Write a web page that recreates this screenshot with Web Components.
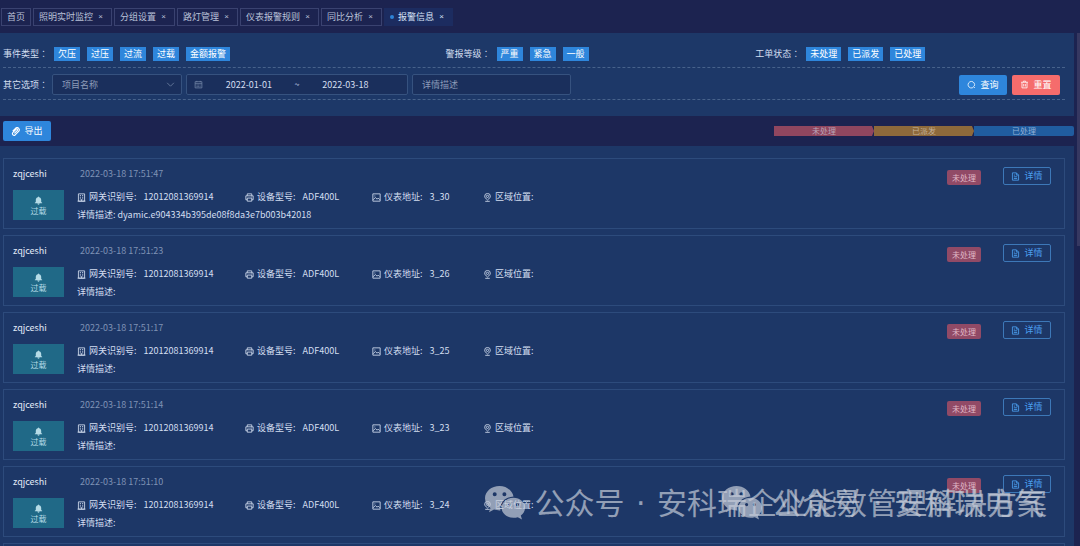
<!DOCTYPE html>
<html lang="zh-CN">
<head>
<meta charset="utf-8">
<title>报警信息</title>
<style>
  body { margin: 0; background: #1c2350; font: 9px/14px "Noto Sans CJK SC", "Liberation Sans", sans-serif; color: #d3def0; }
</style>
</head>
<body>
<alarm-page></alarm-page>
<script>
const RESET = `*{box-sizing:border-box} button,input,select{font:inherit;color:inherit;margin:0;border:0;background:none;border-radius:0;outline:0} button{display:inline-flex;align-items:center;justify-content:center;cursor:pointer;padding:0;white-space:nowrap} svg{display:block;flex:none} .colon{font-family:"Noto Sans CJK TC",sans-serif;margin:0}`;

const ICONS = {
  search: '<path d="M11.5 12.8A5.8 5.8 0 1 1 13 10.800M11.300 11.300l2.700 2.700"/>',
  trash: '<path d="M2 4h12M6 4V2h4v2M3.500 4v10h9V4M6.500 7v4.500M9.500 7v4.500"/>',
  clip: '<path d="M6 11.500l5.500-5.500a1.500 1.500 0 0 0-2.200-2.200L3.200 9.900a3 3 0 0 0 4.200 4.200L14 7.500a4 4 0 0 0-5.600-5.600L3 7.300" stroke-width="2"/>',
  calendar: '<path d="M2 3h12v11H2zM2 6.500h12M5 1.500V4M11 1.500V4M4.500 9h2M7.500 9h2M10.500 9h1M4.500 11.500h2M7.500 11.500h2M10.500 11.500h1"/>',
  chevron: '<path d="M2 5l6 6 6-6"/>',
  building: '<path d="M2.500 1.500h11v13h-11zM1 14.500h14M5 4.500h2M9 4.500h2M5 7.500h2M9 7.500h2M5 10.500h2M9 10.500h2M8 11v3" stroke-width="1.500"/>',
  printer: '<path d="M4 5V1.500h8V5M4 12H1.500V5h13v7H12M4 9h8v5.500H4zM11.500 7h1" stroke-width="1.500"/>',
  picture: '<path d="M1.500 1.500h13v13h-13zM2 12l4-4 3 3 2-2 3 3M5 4.500v1.500" stroke-width="1.500"/>',
  pin: '<path d="M8 12.500C4.500 9.500 3 8 3 5.800a5 5 0 0 1 10 0C13 8 11.500 9.500 8 12.500zM4 14.800h8" stroke-width="1.500"/><circle cx="8" cy="6" r="2"/>',
  doc: '<path d="M2.500 1.500h7l4 4v9h-11zM9.500 1.500v4h4M5 8.500h6M5 11.500h6M5 5.500h2" stroke-width="1.500"/>',
  bell: '<path d="M8 1a1 1 0 0 1 1 1c2.600.5 3.800 2.400 3.800 5v3.500L14.500 12v.8h-13V12l1.700-1.500V7C3.200 4.400 4.400 2.500 7 2a1 1 0 0 1 1-1zM6 13.500h4a2 2 0 0 1-4 0z" fill="currentColor" stroke="none"/>'
};

function define(name, css, html) {
  customElements.define(name, class extends HTMLElement {
    constructor() {
      super();
      this.attachShadow({ mode: 'open' });
    }
    connectedCallback() {
      const body = typeof html === 'function' ? html(this) : html;
      this.shadowRoot.innerHTML = `<style>${RESET}${css}</style>${body}`;
    }
  });
}

define('ui-icon', `:host{display:block;flex:none;width:9px;height:9px} svg{width:100%;height:100%}`,
  el => `<svg viewBox="0 0 16 16" fill="none" stroke="currentColor" stroke-width="1.400" aria-hidden="true">${ICONS[el.getAttribute('name')]}</svg>`);

define('page-tab', `
  :host{display:flex;align-items:center;height:18px;padding:0 8px 0 5px;border:1px solid #3a4270;color:#b9c1d8;white-space:nowrap;box-sizing:border-box}
  :host([fixed]){padding-right:5px}
  :host([active]){border-color:#1c2c60;background:#1c2c60;color:#d5e2f6}
  i{width:4px;height:4px;margin-right:4px;border-radius:50%;background:#2d83d6}
  .close{width:5px;margin-left:5px;font:8px/14px "Liberation Sans",sans-serif}`,
  el => `${el.hasAttribute('active') ? '<i></i>' : ''}<button><slot></slot></button>${el.hasAttribute('fixed') ? '' : '<button class="close" aria-label="关闭">×</button>'}`);

define('filter-group', `
  :host{display:flex;align-items:center}
  #l{margin-right:6px;white-space:nowrap}
  div{display:flex;gap:7px}
  button{height:14px;padding:0 4px;background:#2e86dc;color:#fff}`,
  el => `<span id="l">${el.getAttribute('label')}<span class="colon" lang="zh-TW">：</span></span><div role="group" aria-labelledby="l">${el.getAttribute('options').split(',').map(o => `<button>${o}</button>`).join('')}</div>`);

define('ui-button', `
  :host{display:block;flex:none}
  button{gap:4px;width:48px;height:20px;border-radius:2px;background:#2e86dc;color:#fff}
  :host([kind=danger]) button{background:#f56c6c}
  :host([kind=plain]) button{height:18px;background:none;border:1px solid #3d78b8;color:#4b9ff0}`,
  el => `<button><ui-icon name="${el.getAttribute('icon')}"></ui-icon><slot></slot></button>`);

define('filter-panel', `
  :host{display:block;padding:9px 9px 16px 3px;background:#1d3868}
  .row{border-bottom:1px dashed #47628b}
  .groups{display:grid;grid-template-columns:10fr 7fr 7fr;padding:5px 0 6px}
  .fields{display:flex;align-items:center;gap:4px;padding:6px 5px 4px 0}
  .box{display:flex;align-items:center;height:21px;min-width:0;border:1px solid #36527f;border-radius:2px;background:#1a2f5c}
  .pick{position:relative;flex:0 1 130px}
  select{appearance:none;width:100%;height:100%;padding:0 20px 0 9px;color:#8c9bb8}
  .pick ui-icon{position:absolute;right:6px;color:#7284a6;pointer-events:none}
  .range{flex:0 1 222px;padding:0 16px 0 7px}
  .range ui-icon{color:#7284a6}
  .range input{flex:1;width:0;min-width:0;text-align:center;padding:0}
  .desc{flex:0 1 159px;padding:0 9px}
  .desc::placeholder{color:#8c9bb8;opacity:1}
  .end{display:flex;gap:5px;margin-left:auto}`,
  `<div class="row groups">
     <filter-group label="事件类型" options="欠压,过压,过流,过载,金额报警"></filter-group>
     <filter-group label="警报等级" options="严重,紧急,一般"></filter-group>
     <filter-group label="工单状态" options="未处理,已派发,已处理"></filter-group>
   </div>
   <div class="row fields">
     <label for="project">其它选项<span class="colon" lang="zh-TW">：</span></label>
     <div class="box pick"><select id="project"><option>项目名称</option></select><ui-icon name="chevron"></ui-icon></div>
     <div class="box range"><ui-icon name="calendar"></ui-icon><input aria-label="开始日期" value="2022-01-01"><span>~</span><input aria-label="结束日期" value="2022-03-18"></div>
     <input class="box desc" aria-label="详情描述" placeholder="详情描述">
     <div class="end"><ui-button icon="search">查询</ui-button><ui-button icon="trash" kind="danger">重置</ui-button></div>
   </div>`);

define('status-legend', `
  :host{display:flex;width:300px}
  span{flex:1;height:10px;line-height:10px;font-size:8px;text-align:center;color:#b9a5b8;background:#90465f;clip-path:polygon(0 0,98% 0,100% 50%,98% 100%,0 100%)}
  .sent{background:#8e693b;color:#c5b19a}
  .done{background:#205c9f;color:#8fb0d8;border-radius:0 2px 2px 0;clip-path:none}`,
  `<span>未处理</span><span class="sent">已派发</span><span class="done">已处理</span>`);

define('info-field', `
  :host{display:flex;align-items:center;white-space:nowrap}
  ui-icon{margin-right:3px} b{font-weight:400;margin-right:7px}`,
  el => `<ui-icon name="${el.getAttribute('icon')}"></ui-icon><b>${el.getAttribute('label')}:</b><slot></slot>`);

define('alarm-card', `
  :host{display:flex;justify-content:space-between;min-height:71px;padding:8px 13px 4px 9px;border:1px solid #2d4b7c;line-height:18px;box-sizing:border-box}
  .head{display:flex;height:14px;line-height:14px;margin-bottom:5px}
  .name{width:67px;color:#e4ecf8}
  time{color:#7f92b5}
  .body{display:flex;align-items:center;gap:13px}
  .type{display:flex;flex-direction:column;align-items:center;justify-content:center;width:51px;height:30px;padding-top:2px;line-height:11px;background:#206987;color:#b5dbe6;font-size:8px}
  .info{padding-top:2px}
  .fields{display:grid;grid-template-columns:168px 127px 111px auto}
  .side{display:flex;align-items:center;gap:22px;height:18px;margin-top:1px}
  .tag{height:15px;padding:0 5px;border-radius:2px;background:#914a66;color:#e0b9c6;font-size:8px;line-height:15px}`,
  el => el.hasAttribute('time') ? `
   <div>
     <div class="head"><span class="name">zqjceshi</span><time>2022-03-18 ${el.getAttribute('time')}</time></div>
     <div class="body">
       <div class="type"><ui-icon name="bell"></ui-icon>过载</div>
       <div class="info">
         <div class="fields">
           <info-field icon="building" label="网关识别号">12012081369914</info-field>
           <info-field icon="printer" label="设备型号">ADF400L</info-field>
           <info-field icon="picture" label="仪表地址">${el.getAttribute('address')}</info-field>
           <info-field icon="pin" label="区域位置"></info-field>
         </div>
         <div>详情描述: <slot></slot></div>
       </div>
     </div>
   </div>
   <div class="side"><span class="tag">未处理</span><ui-button icon="doc" kind="plain">详情</ui-button></div>` : '');

define('account-mark', `
  :host{display:flex;align-items:center;gap:9px;font-size:30px;line-height:40px;color:#c4cbd8;opacity:.7;white-space:nowrap;pointer-events:none}
  svg{width:40px;height:34px}
  i{font-style:normal;font-family:"DejaVu Sans",sans-serif;margin:0 2px}`,
  `<svg viewBox="0 0 40 34" aria-hidden="true">
     <path fill="currentColor" fill-rule="evenodd" d="M14.500 0C6.500 0 0 5.500 0 12.300c0 3.900 2.100 7.300 5.500 9.600L4 26.200l5-2.600c2.200.6 4.200.9 6.400.8C14.200 17 20 11 28.500 10.500 27.300 4.500 21.500 0 14.500 0zM9.700 6.300a2 2 0 1 1 0 4 2 2 0 0 1 0-4zm9.700 0a2 2 0 1 1 0 4 2 2 0 0 1 0-4z"/>
     <path fill="currentColor" fill-rule="evenodd" d="M28.500 11.800c6.500 0 11.500 4.500 11.500 10 0 3.200-1.500 5.900-4.200 7.800l1.200 3.900-4.200-2.300c-1.400.4-2.800.6-4.300.6-6.600 0-11.900-4.500-11.900-10s5.300-10 11.900-10zM24.600 17a1.600 1.600 0 1 0 0 3.200 1.600 1.600 0 0 0 0-3.200zm7.800 0a1.600 1.600 0 1 0 0 3.200 1.600 1.600 0 0 0 0-3.200z"/>
   </svg><span>公众号<i>&nbsp;·&nbsp;</i><slot></slot></span>`);

define('alarm-page', `
  :host{display:flex;flex-direction:column;position:relative;height:100vh;overflow:hidden}
  nav{display:flex;gap:2px;padding:8px 1px 7px}
  .view{display:flex;flex:1;min-height:0;gap:3px}
  .main{display:flex;flex-direction:column;flex:1;min-width:0}
  .bar{display:flex;align-items:center;justify-content:space-between;height:30px;padding-left:3px}
  .list{display:flex;flex-direction:column;flex:1;gap:6px;min-height:0;overflow:hidden;padding:12px 9px 0 3px;background:#1d3767}
  alarm-card{flex:none}
  .thumb{width:3px;height:213px;background:#363861}
  account-mark{position:absolute;right:33px;bottom:22px}
  .brand{right:36px}`,
  `<nav>
     <page-tab fixed>首页</page-tab><page-tab>照明实时监控</page-tab><page-tab>分组设置</page-tab><page-tab>路灯管理</page-tab><page-tab>仪表报警规则</page-tab><page-tab>同比分析</page-tab><page-tab active>报警信息</page-tab>
   </nav>
   <div class="view">
     <div class="main">
       <filter-panel></filter-panel>
       <div class="bar"><ui-button icon="clip">导出</ui-button><status-legend></status-legend></div>
       <div class="list">
         <alarm-card time="17:51:47" address="3_30">dyamic.e904334b395de08f8da3e7b003b42018</alarm-card>
         <alarm-card time="17:51:23" address="3_26"></alarm-card>
         <alarm-card time="17:51:17" address="3_25"></alarm-card>
         <alarm-card time="17:51:14" address="3_23"></alarm-card>
         <alarm-card time="17:51:10" address="3_24"></alarm-card>
         <alarm-card></alarm-card>
       </div>
     </div>
     <div class="thumb"></div>
   </div>
   <account-mark>安科瑞企业能效管理解决方案</account-mark>
   <account-mark class="brand">安科瑞电气</account-mark>`);
</script>
</body>
</html>
